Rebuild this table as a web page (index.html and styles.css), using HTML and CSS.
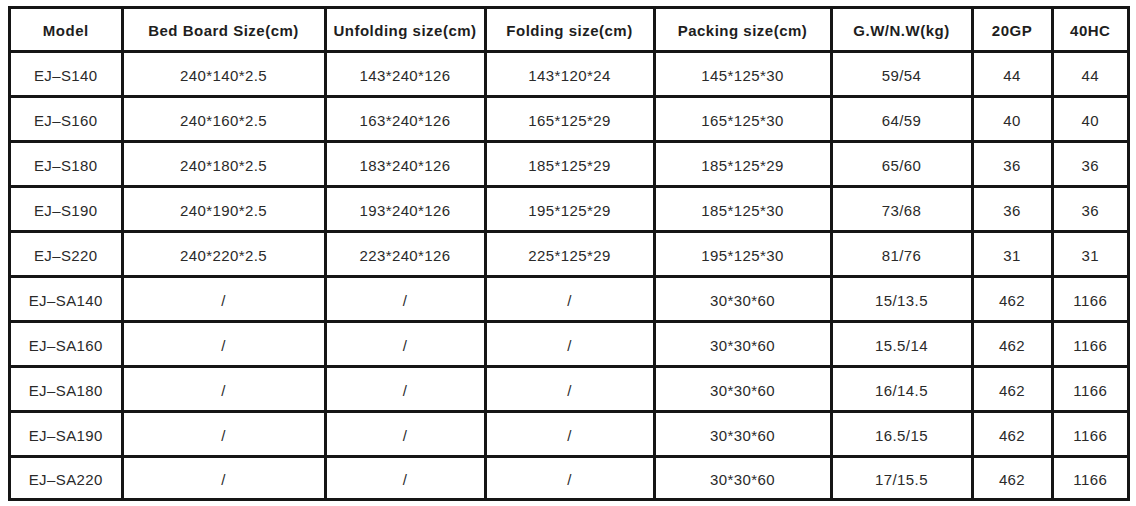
FILE: index.html
```html
<!DOCTYPE html>
<html>
<head>
<meta charset="utf-8">
<link rel="stylesheet" href="styles.css">
</head>
<body>
<table class="spec">
<colgroup>
<col class="c1"><col class="c2"><col class="c3"><col class="c4"><col class="c5"><col class="c6"><col class="c7"><col class="c8">
</colgroup>
<thead>
<tr><th>Model</th><th>Bed Board Size(cm)</th><th>Unfolding size(cm)</th><th>Folding size(cm)</th><th>Packing size(cm)</th><th>G.W/N.W(kg)</th><th>20GP</th><th>40HC</th></tr>
</thead>
<tbody>
<tr><td>EJ–S140</td><td>240*140*2.5</td><td>143*240*126</td><td>143*120*24</td><td>145*125*30</td><td>59/54</td><td>44</td><td>44</td></tr>
<tr><td>EJ–S160</td><td>240*160*2.5</td><td>163*240*126</td><td>165*125*29</td><td>165*125*30</td><td>64/59</td><td>40</td><td>40</td></tr>
<tr><td>EJ–S180</td><td>240*180*2.5</td><td>183*240*126</td><td>185*125*29</td><td>185*125*29</td><td>65/60</td><td>36</td><td>36</td></tr>
<tr><td>EJ–S190</td><td>240*190*2.5</td><td>193*240*126</td><td>195*125*29</td><td>185*125*30</td><td>73/68</td><td>36</td><td>36</td></tr>
<tr><td>EJ–S220</td><td>240*220*2.5</td><td>223*240*126</td><td>225*125*29</td><td>195*125*30</td><td>81/76</td><td>31</td><td>31</td></tr>
<tr><td>EJ–SA140</td><td>/</td><td>/</td><td>/</td><td>30*30*60</td><td>15/13.5</td><td>462</td><td>1166</td></tr>
<tr><td>EJ–SA160</td><td>/</td><td>/</td><td>/</td><td>30*30*60</td><td>15.5/14</td><td>462</td><td>1166</td></tr>
<tr><td>EJ–SA180</td><td>/</td><td>/</td><td>/</td><td>30*30*60</td><td>16/14.5</td><td>462</td><td>1166</td></tr>
<tr><td>EJ–SA190</td><td>/</td><td>/</td><td>/</td><td>30*30*60</td><td>16.5/15</td><td>462</td><td>1166</td></tr>
<tr class="last"><td>EJ–SA220</td><td>/</td><td>/</td><td>/</td><td>30*30*60</td><td>17/15.5</td><td>462</td><td>1166</td></tr>
</tbody>
</table>
</body>
</html>
```

FILE: styles.css
```css
html, body {
  margin: 0;
  background: #ffffff;
}
body {
  padding: 6px 0 0 8px;
  font-family: "Liberation Sans", Arial, sans-serif;
  color: #2a2a2a;
}
.spec {
  border-collapse: collapse;
  table-layout: fixed;
  width: 1122px;
  border: 3px solid #151515;
}
.c1 { width: 112.5px; }
.c2 { width: 203px; }
.c3 { width: 160px; }
.c4 { width: 169px; }
.c5 { width: 177px; }
.c6 { width: 141px; }
.c7 { width: 80px; }
.c8 { width: 76.5px; }
.spec th, .spec td {
  border: 3px solid #151515;
  text-align: center;
  vertical-align: middle;
  padding: 3px 0 0 0;
  font-size: 15px;
  line-height: 16px;
  letter-spacing: 0.4px;
  white-space: nowrap;
}
.spec th {
  font-weight: bold;
  letter-spacing: 0.5px;
  color: #1e1e1e;
}
.spec thead tr { height: 44px; }
.spec tbody tr { height: 45px; }
.spec tbody tr.last { height: 43px; }
```
